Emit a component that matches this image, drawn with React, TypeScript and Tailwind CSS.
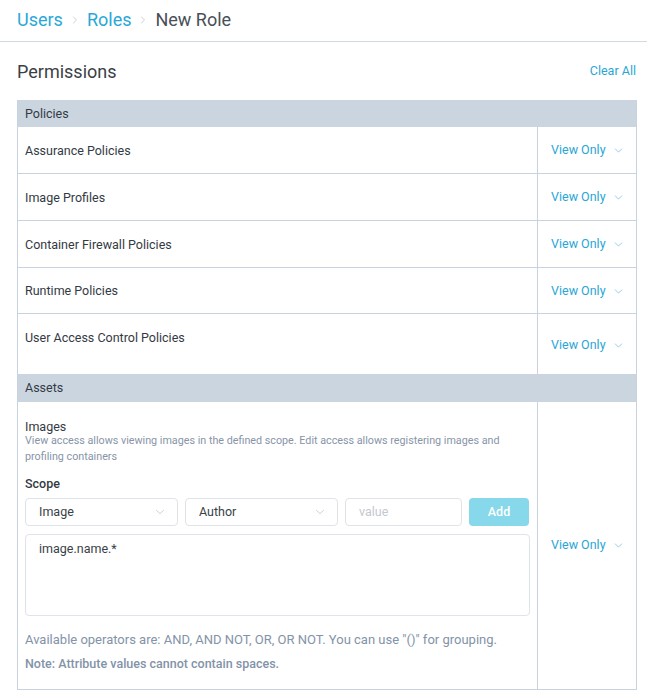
import { ChevronDown, ChevronRight } from "lucide-react";

const policies = [
  { name: "Assurance Policies", h: "h-[47px]" },
  { name: "Image Profiles", h: "h-[47px]" },
  { name: "Container Firewall Policies", h: "h-[47px]" },
  { name: "Runtime Policies", h: "h-[46px]" },
];

function AccessSelect() {
  return (
    <button className="flex items-center gap-[6px] text-[12.5px] text-[#2aa6d5]" type="button">
      View Only
      <ChevronDown className="h-[13px] w-[13px] text-[#7cc4e2]" strokeWidth={1.5} />
    </button>
  );
}

function Dropdown({ label, width }: { label: string; width: string }) {
  return (
    <div className={`${width} flex h-[28px] items-center justify-between rounded-[4px] border border-[#dfe3ea] bg-white pl-[13px] pr-[10px] text-[12.5px] text-[#3a3f47]`}>
      {label}
      <ChevronDown className="h-[14px] w-[14px] text-[#b7bfca]" strokeWidth={1.3} />
    </div>
  );
}

export default function App() {
  return (
    <div className="min-h-screen bg-white font-['Roboto',sans-serif] text-[#333a44]">
      <header className="flex h-[42px] items-center gap-[6px] border-b border-[#d3d9e1] px-[17px] pb-[2px] text-[18px]">
        <span className="text-[#29a8d8]">Users</span>
        <ChevronRight className="h-[12px] w-[12px] text-[#b9c0c9]" strokeWidth={1.5} />
        <span className="text-[#29a8d8]">Roles</span>
        <ChevronRight className="h-[12px] w-[12px] text-[#b9c0c9]" strokeWidth={1.5} />
        <span className="text-[#4a4f57]">New Role</span>
      </header>

      <div className="flex h-[58px] items-center justify-between pl-[17px] pr-[11px]">
        <h2 className="text-[18px] text-[#3a3f47]">Permissions</h2>
        <button className="text-[12.5px] text-[#2aa6d5]" type="button">
          Clear All
        </button>
      </div>

      <div className="ml-[17px] mr-[10px] border-x border-[#c9d3df]">
        <div className="flex h-[27px] items-center bg-[#cbd5e0] px-[7px] pt-[1px] text-[12.5px] text-[#333a44]">Policies</div>
        {policies.map((p) => (
          <div key={p.name} className={`flex ${p.h} border-b border-[#c9d3df]`}>
            <div className="flex flex-1 items-center px-[7px] pt-[2px] text-[12.5px]">{p.name}</div>
            <div className="flex w-[99px] items-center border-l border-[#c9d3df] pl-[13px] pt-[1px]">
              <AccessSelect />
            </div>
          </div>
        ))}
        <div className="flex h-[60px]">
          <div className="flex-1 px-[7px] pt-[15px] text-[12.5px]">User Access Control Policies</div>
          <div className="flex w-[99px] items-center border-l border-[#c9d3df] pl-[13px] pt-[2px]">
            <AccessSelect />
          </div>
        </div>

        <div className="flex h-[28px] items-center bg-[#cbd5e0] px-[7px] text-[12.5px] text-[#333a44]">Assets</div>
        <div className="flex border-b border-[#c9d3df]">
          <div className="flex-1 px-[7px] pb-[17px] pt-[17px]">
            <div className="text-[12.5px] leading-[16px]">Images</div>
            <p className="-mt-[2px] text-[10.75px] leading-[16px] text-[#8795a8]">
              View access allows viewing images in the defined scope. Edit access allows registering images and
              profiling containers
            </p>
            <div className="mt-[11px] text-[12.5px] font-medium leading-[16px]">Scope</div>
            <div className="mt-[6px] flex gap-[7px]">
              <Dropdown label="Image" width="w-[153px]" />
              <Dropdown label="Author" width="w-[153px]" />
              <div className="flex h-[28px] w-[117px] items-center rounded-[4px] border border-[#dfe3ea] px-[13px] text-[12.5px] text-[#c3c8cf]">
                value
              </div>
              <button className="h-[28px] w-[60px] rounded-[4px] bg-[#86d8ea] text-[12.5px] font-medium text-white" type="button">
                Add
              </button>
            </div>
            <div className="mt-[8px] h-[82px] rounded-[4px] border border-[#dfe3ea] px-[13px] pt-[5px] text-[12.5px] text-[#3a3f47]">
              image.name.*
            </div>
            <p className="mt-[16px] text-[13px] leading-[16px] text-[#8393a8]">
              Available operators are: AND, AND NOT, OR, OR NOT. You can use "()" for grouping.
            </p>
            <p className="mt-[8px] text-[12.5px] font-medium leading-[16px] text-[#8393a8]">
              Note: Attribute values cannot contain spaces.
            </p>
          </div>
          <div className="flex w-[99px] items-center border-l border-[#c9d3df] pl-[13px]">
            <AccessSelect />
          </div>
        </div>
      </div>
    </div>
  );
}
